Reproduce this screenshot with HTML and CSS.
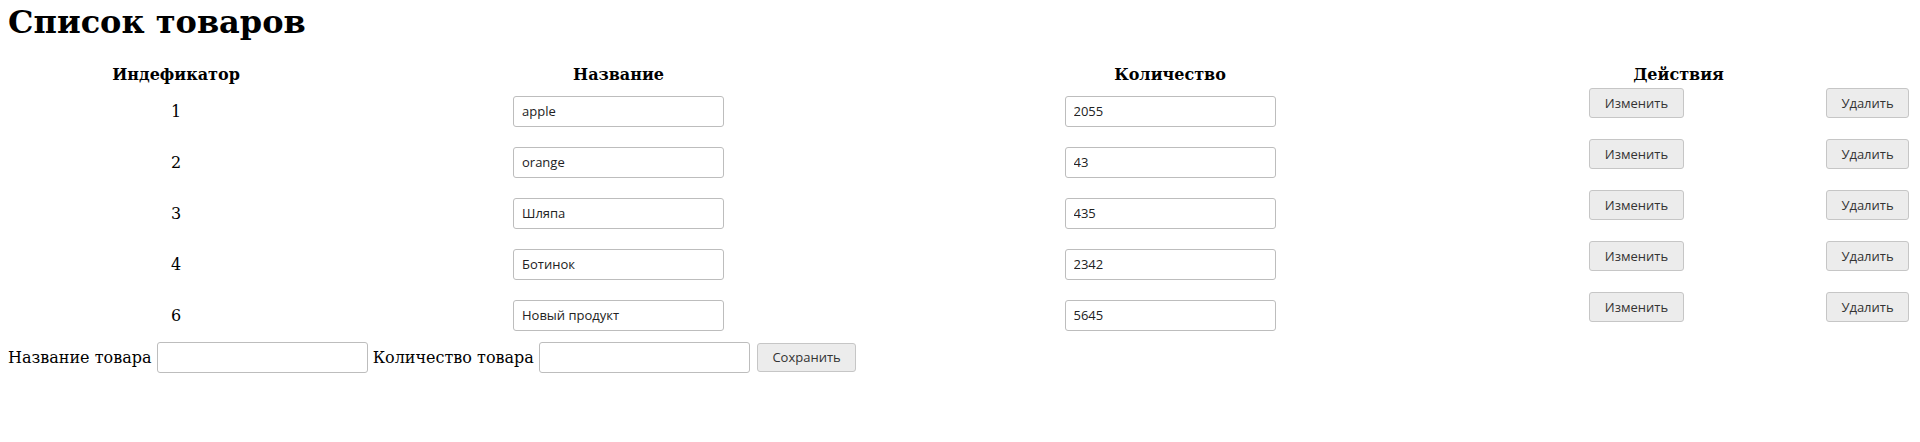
FILE: index.html
```html
<!DOCTYPE html>
<html lang="ru">
<head>
<meta charset="utf-8">
<title>Список товаров</title>
<link rel="stylesheet" href="styles.css">
</head>
<body>
<h1 class="title">Список товаров</h1>
<table class="products">
  <colgroup>
    <col class="c-id">
    <col class="c-name">
    <col class="c-qty">
    <col class="c-edit">
    <col class="c-del">
  </colgroup>
  <thead>
    <tr>
      <th>Индефикатор</th>
      <th>Название</th>
      <th>Количество</th>
      <th colspan="2">Действия</th>
    </tr>
  </thead>
  <tbody>
    <tr>
      <td class="cell-id">1</td>
      <td class="cell-field"><input class="field" type="text" value="apple"></td>
      <td class="cell-field"><input class="field" type="text" value="2055"></td>
      <td class="cell-act"><form class="act-form"><button class="btn btn-edit" type="button">Изменить</button></form></td>
      <td class="cell-act"><form class="act-form"><button class="btn btn-del" type="button">Удалить</button></form></td>
    </tr>
    <tr>
      <td class="cell-id">2</td>
      <td class="cell-field"><input class="field" type="text" value="orange"></td>
      <td class="cell-field"><input class="field" type="text" value="43"></td>
      <td class="cell-act"><form class="act-form"><button class="btn btn-edit" type="button">Изменить</button></form></td>
      <td class="cell-act"><form class="act-form"><button class="btn btn-del" type="button">Удалить</button></form></td>
    </tr>
    <tr>
      <td class="cell-id">3</td>
      <td class="cell-field"><input class="field" type="text" value="Шляпа"></td>
      <td class="cell-field"><input class="field" type="text" value="435"></td>
      <td class="cell-act"><form class="act-form"><button class="btn btn-edit" type="button">Изменить</button></form></td>
      <td class="cell-act"><form class="act-form"><button class="btn btn-del" type="button">Удалить</button></form></td>
    </tr>
    <tr>
      <td class="cell-id">4</td>
      <td class="cell-field"><input class="field" type="text" value="Ботинок"></td>
      <td class="cell-field"><input class="field" type="text" value="2342"></td>
      <td class="cell-act"><form class="act-form"><button class="btn btn-edit" type="button">Изменить</button></form></td>
      <td class="cell-act"><form class="act-form"><button class="btn btn-del" type="button">Удалить</button></form></td>
    </tr>
    <tr>
      <td class="cell-id">6</td>
      <td class="cell-field"><input class="field" type="text" value="Новый продукт"></td>
      <td class="cell-field"><input class="field" type="text" value="5645"></td>
      <td class="cell-act"><form class="act-form"><button class="btn btn-edit" type="button">Изменить</button></form></td>
      <td class="cell-act"><form class="act-form"><button class="btn btn-del" type="button">Удалить</button></form></td>
    </tr>
  </tbody>
</table>
<form class="add-form">Название товара <input class="field" type="text"> Количество товара <input class="field" type="text"> <button class="btn btn-save" type="button">Сохранить</button></form>
</body>
</html>
```

FILE: styles.css
```css
body {
  margin: 0 8px 8px;
  font-family: "DejaVu Serif", serif;
  font-size: 16px;
  color: #000;
  background: #fff;
}

.title {
  font-size: 32px;
  font-weight: bold;
  margin: 2.5px 0 21.44px;
}

.products {
  width: 100%;
  table-layout: fixed;
  border-spacing: 2px;
}

.c-id { width: 332px; }
.c-name { width: 549px; }
.c-qty { width: 550px; }
.c-edit { width: 376px; }
.c-del { width: 85px; }

.products th,
.products td {
  padding: 1px;
  text-align: center;
  vertical-align: middle;
}

.act-form {
  margin: 0 0 17px;
}

.field {
  box-sizing: border-box;
  width: 211px;
  height: 31px;
  padding: 0 8px;
  border: 1px solid #bdbdbd;
  border-radius: 3px;
  font-family: "Open Sans", sans-serif;
  font-size: 13px;
  color: #222;
  background: #fff;
  margin: 0;
}

.btn {
  box-sizing: border-box;
  height: 30px;
  padding: 0 14px;
  border: 1px solid #c6c6c6;
  border-radius: 3px;
  background: #ececec;
  font-family: "Open Sans", sans-serif;
  font-size: 13px;
  color: #333;
  margin: 0;
}

.btn-edit { width: 95px; margin-left: 3px; }
.btn-del { width: 83px; }
.btn-save { width: 99px; height: 29px; margin-left: 2px; }
```
